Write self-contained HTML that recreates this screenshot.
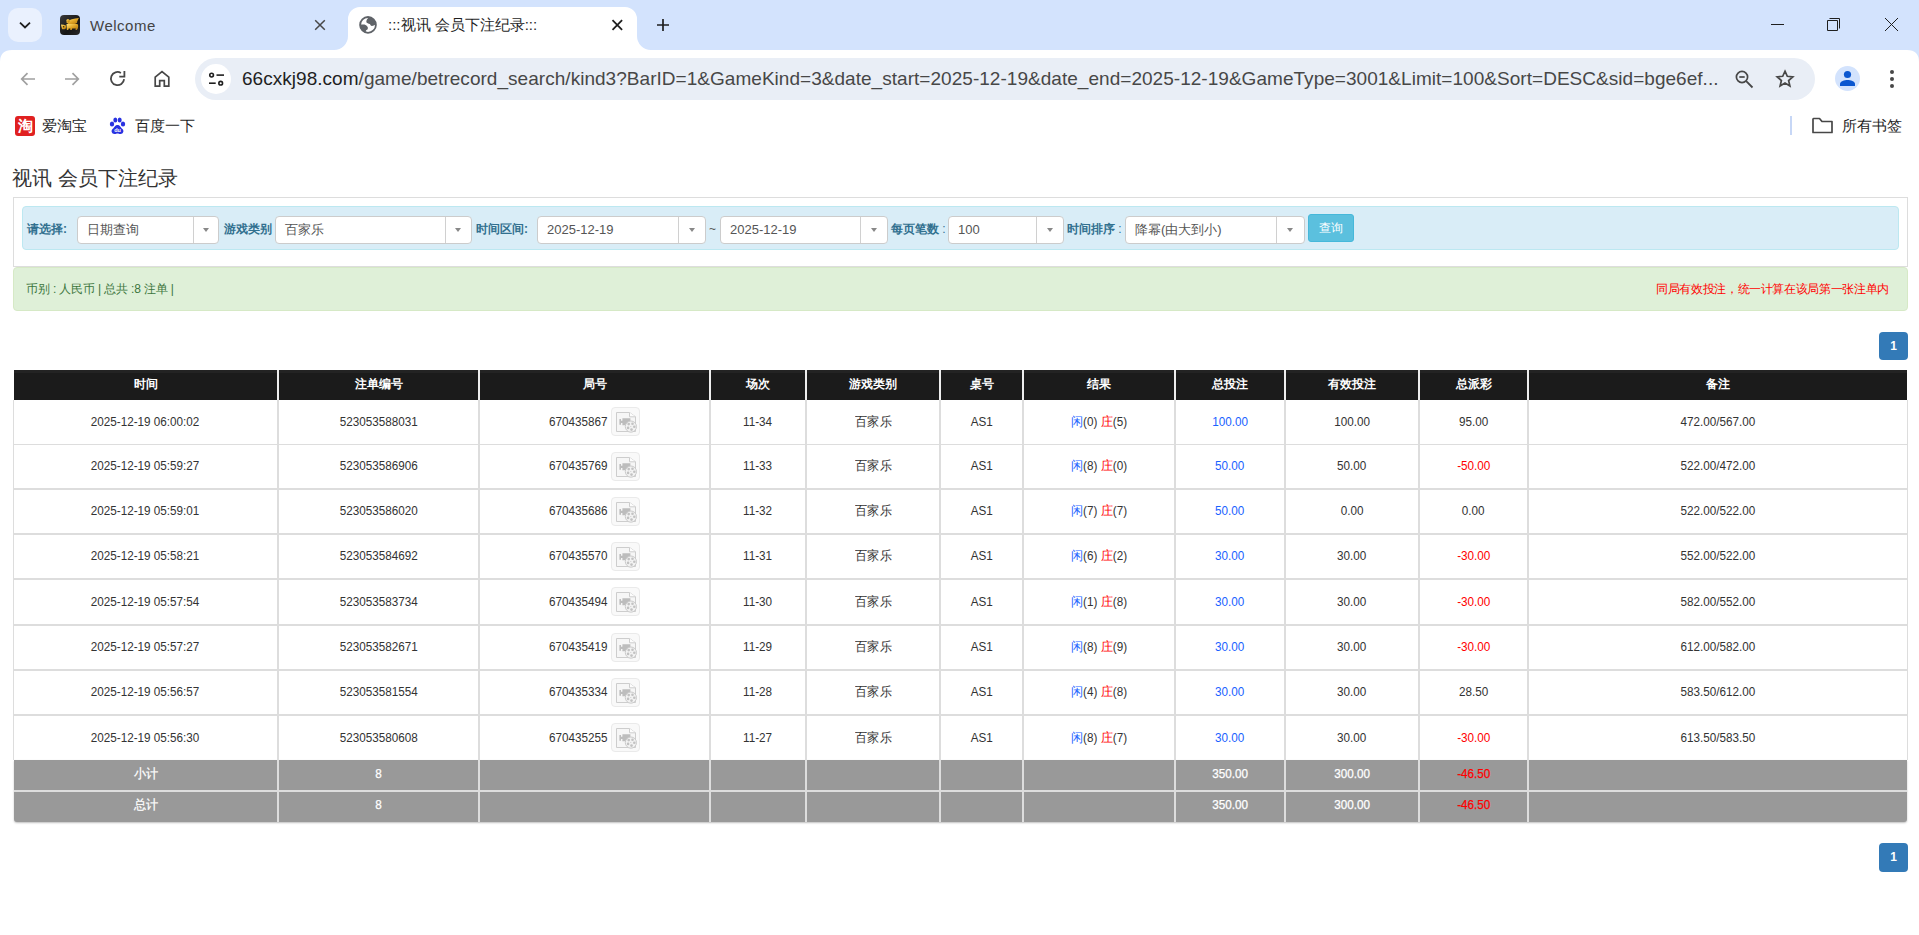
<!DOCTYPE html>
<html><head><meta charset="utf-8">
<style>
*{box-sizing:border-box}
html,body{margin:0;padding:0;width:1919px;height:935px;overflow:hidden;background:#fff;font-family:"Liberation Sans",sans-serif;color:#333}
.a{position:absolute}
#tabbar{position:absolute;left:0;top:0;width:1919px;height:50px;background:#d3e3fd}
#toolbar{position:absolute;left:0;top:50px;width:1919px;height:92px;background:#fff}
.ttl{position:absolute;white-space:nowrap;font-size:16px;color:#1f1f1f}
.omni{position:absolute;left:195px;top:58px;width:1620px;height:42px;border-radius:21px;background:#e9eef6}
.url{position:absolute;left:242px;top:67px;font-size:19px;letter-spacing:0.035px;white-space:nowrap;color:#474747;line-height:24px}
.url b{font-weight:normal;color:#1f1f1f}
.bm{position:absolute;font-size:15px;color:#1f1f1f;white-space:nowrap;line-height:18px}
/* page */
.h1{position:absolute;left:12px;top:164px;font-size:20px;line-height:28px;color:#333;white-space:nowrap}
.panel{position:absolute;left:13px;top:197px;width:1895px;height:70px;border:1px solid #ddd;border-bottom:1px solid #ddd}
.info{position:absolute;left:22px;top:206px;width:1877px;height:44px;background:#d9edf7;border:1px solid #bce8f1;border-radius:4px}
.lab{position:absolute;top:221px;font-size:12px;font-weight:bold;color:#31708f;white-space:nowrap;line-height:16px}
.sel{position:absolute;top:216px;height:28px;background:#fff;border:1px solid #ccc;border-radius:4px}
.sel .tx{position:absolute;left:9px;top:0;line-height:26px;font-size:13px;color:#555;white-space:nowrap}
.sel .dv{position:absolute;top:0;bottom:0;width:1px;background:#d0d0d0}
.sel .ar{position:absolute;top:11px;width:0;height:0;border-left:3.5px solid transparent;border-right:3.5px solid transparent;border-top:4px solid #888}
.btn{position:absolute;left:1308px;top:214px;width:46px;height:28px;background:#5bc0de;border:1px solid #46b8da;border-radius:3px;color:#fff;font-size:12px;text-align:center;line-height:26px}
.alert{position:absolute;left:13px;top:267px;width:1895px;height:44px;background:#dff0d8;border:1px solid #d6e9c6;border-radius:4px}
.pg{position:absolute;left:1879px;width:29px;height:28px;background:#337ab7;border-radius:4px;color:#fff;font-size:12px;font-weight:bold;text-align:center;line-height:28px}
/* table */
.c{position:absolute;text-align:center;font-size:11.7px;color:#333;white-space:nowrap}
.s{display:inline-block;font-size:12.5px;transform:scaleX(.936);vertical-align:top;position:relative;top:1px}
.th{color:#fff;font-weight:bold;font-size:12px}
.gt{color:#fff;-webkit-text-stroke:0.25px #fff}
.gt .rd{-webkit-text-stroke:0.25px #ff0000}
.thbg{position:absolute;background:#1b1b1b;border-top:3px solid #232323}
.gbg{position:absolute;background:#999;border-radius:0 0 3px 3px;box-shadow:0 1px 2px rgba(0,0,0,.25)}
.hl{position:absolute;height:1px;background:#dddddd}
.hl2{position:absolute;height:2px;background:#dddddd}
.vl{position:absolute;width:2px;background:#dddddd}
.vl1{position:absolute;width:1px;background:#dddddd}
.bl{color:#1a62ff}
.rd{color:#ff0000}
.sj{transform-origin:0 50%;margin-right:-4px}
.vb{display:inline-block;vertical-align:middle;width:29px;height:29px;margin-left:4px;margin-top:0;border:1px solid #eaeaea;border-radius:4px;background:#f9f9f9;position:relative;line-height:0}
.vb svg{position:absolute;left:4px;top:4px}
</style></head><body>
<!-- TAB BAR -->
<div id="tabbar"></div>
<div class="a" style="left:8px;top:8px;width:34px;height:34px;border-radius:10px;background:#eaf1fe"></div>
<svg class="a" style="left:17px;top:17px" width="16" height="16" viewBox="0 0 16 16"><path d="M3 5.6L8 10.4L13 5.6" fill="none" stroke="#1f1f1f" stroke-width="1.8"/></svg>
<div class="a" style="left:60px;top:15px;width:20px;height:20px;border-radius:4px;background:linear-gradient(135deg,#3a3a3a,#151515 60%,#2a2a2a);overflow:hidden">
 <svg width="20" height="20" viewBox="0 0 20 20"><defs><linearGradient id="gd" x1="0" y1="0" x2="1" y2="1"><stop offset="0" stop-color="#ffe27a"/><stop offset=".5" stop-color="#e0a626"/><stop offset="1" stop-color="#a8700e"/></linearGradient></defs>
 <path d="M6.2 7.2C9 4.8 14 3.6 19 3.1C17.8 4.4 18.1 5.4 17.2 6.4C17.6 7.4 16.6 8.5 15 9L9 9.6Z" fill="url(#gd)"/>
 <circle cx="8" cy="5.8" r="1.7" fill="url(#gd)"/>
 <path d="M6.5 9H17.4C18.5 10 18.3 12 17.8 13.5L16.9 15H15.5L15.8 13.6H12.2L11.7 15H10.2L10.4 13.6H8.7L8.2 15H6.9L6.6 12Z" fill="url(#gd)"/>
 <path d="M1 9.6C2.6 9.6 4.5 10 6 10.6V13.2C4.6 14.6 3 14.6 2 13.9C1.5 12.2 1.2 11.1 1 9.6Z" fill="url(#gd)"/>
 <circle cx="3.6" cy="11.8" r="0.8" fill="#3a2a08"/></svg>
</div>
<div class="ttl" style="left:90px;top:17px;line-height:18px;font-size:15px;letter-spacing:0.5px;color:#444">Welcome</div>
<svg class="a" style="left:313px;top:18px" width="14" height="14" viewBox="0 0 14 14"><path d="M2.2 2.2L11.8 11.8M11.8 2.2L2.2 11.8" stroke="#474747" stroke-width="1.5"/></svg>
<!-- active tab -->
<svg class="a" style="left:334px;top:0" width="317" height="50" viewBox="0 0 317 50"><path d="M0 50A14 14 0 0 0 14 36V19A12 12 0 0 1 26 7H291A12 12 0 0 1 303 19V36A14 14 0 0 0 317 50Z" fill="#fff"/></svg>
<svg class="a" style="left:358px;top:15px" width="20" height="20" viewBox="0 0 20 20"><circle cx="10" cy="9.9" r="7.9" fill="#fff" stroke="#5f6368" stroke-width="1.8"/><path d="M11 2.1C10 3.5 8.3 4.6 8.3 6.9C8.6 8.4 10.6 8.2 11.8 9.1C12.4 9.8 12.6 11 14 11C15.2 11 16.3 10.4 17.9 9.6A7.9 7.9 0 0 0 11 2.1Z" fill="#5f6368"/><path d="M2.1 9.6C4 9.7 6.5 9.3 8 10.2C9.3 11 10.6 12.6 9.6 14.2C9 15 7.9 14.9 7.8 16.1C7.7 16.8 7.6 17.2 7.8 17.6A7.9 7.9 0 0 1 2.1 9.6Z" fill="#5f6368"/></svg>
<div class="ttl" style="left:388px;top:16px;line-height:18px;font-size:15px;color:#1f1f1f">:::视讯 会员下注纪录:::</div>
<svg class="a" style="left:610px;top:18px" width="14" height="14" viewBox="0 0 14 14"><path d="M2.5 2.2L12.1 11.8M12.1 2.2L2.5 11.8" stroke="#1f1f1f" stroke-width="1.8"/></svg>
<svg class="a" style="left:655px;top:17px" width="16" height="16" viewBox="0 0 16 16"><path d="M8 2V14M2 8H14" stroke="#1f1f1f" stroke-width="1.7"/></svg>
<!-- window controls -->
<div class="a" style="left:1771px;top:24px;width:13px;height:1px;background:#1f1f1f"></div>
<svg class="a" style="left:1826px;top:17px" width="16" height="16" viewBox="0 0 16 16"><path d="M1.5 3.5H11.5V13.5H1.5Z" fill="none" stroke="#1f1f1f" stroke-width="1"/><path d="M3.5 1.5H13.5V11.5" fill="none" stroke="#1f1f1f" stroke-width="1"/></svg>
<svg class="a" style="left:1884px;top:17px" width="15" height="15" viewBox="0 0 15 15"><path d="M1 1L14 14M14 1L1 14" stroke="#1f1f1f" stroke-width="1"/></svg>
<!-- TOOLBAR -->
<div id="toolbar"></div>
<svg class="a" style="left:0;top:50px" width="12" height="12" viewBox="0 0 12 12"><path d="M0 0H12Q0 0 0 12Z" fill="#d3e3fd"/></svg>
<svg class="a" style="left:1907px;top:50px" width="12" height="12" viewBox="0 0 12 12"><path d="M0 0H12V12Q12 0 0 0Z" fill="#d3e3fd"/></svg>
<svg class="a" style="left:18px;top:69px" width="20" height="20" viewBox="0 0 20 20"><path d="M17 10H4M9.5 4.2L3.7 10L9.5 15.8" fill="none" stroke="#a0a0a0" stroke-width="1.7"/></svg>
<svg class="a" style="left:62px;top:69px" width="20" height="20" viewBox="0 0 20 20"><path d="M3 10H16M10.5 4.2L16.3 10L10.5 15.8" fill="none" stroke="#a0a0a0" stroke-width="1.7"/></svg>
<svg class="a" style="left:107px;top:69px" width="20" height="20" viewBox="0 0 20 20"><path d="M13.9 3.9A6.6 6.6 0 1 0 17.1 10.2" fill="none" stroke="#474747" stroke-width="1.8"/><path d="M12.3 7.6H17.4V2.1" fill="none" stroke="#474747" stroke-width="1.8"/></svg>
<svg class="a" style="left:152px;top:69px" width="20" height="20" viewBox="0 0 20 20"><path d="M3.2 17.2V8.2L10 2.6L16.8 8.2V17.2H12.3V11.6H7.7V17.2Z" fill="none" stroke="#474747" stroke-width="1.7" stroke-linejoin="miter"/></svg>
<div class="omni"></div>
<div class="a" style="left:201px;top:64px;width:30px;height:30px;border-radius:15px;background:#fff"></div>
<svg class="a" style="left:206px;top:69px" width="20" height="20" viewBox="0 0 20 20"><circle cx="5.6" cy="6.1" r="1.85" fill="none" stroke="#1f1f1f" stroke-width="1.6"/><path d="M10.5 6.1H18" stroke="#1f1f1f" stroke-width="1.6"/><circle cx="14.7" cy="14.2" r="1.85" fill="none" stroke="#1f1f1f" stroke-width="1.6"/><path d="M3 14.2H9.7" stroke="#1f1f1f" stroke-width="1.6"/></svg>
<div class="url"><b>66cxkj98.com</b>/game/betrecord_search/kind3?BarID=1&amp;GameKind=3&amp;date_start=2025-12-19&amp;date_end=2025-12-19&amp;GameType=3001&amp;Limit=100&amp;Sort=DESC&amp;sid=bge6ef...</div>
<svg class="a" style="left:1734px;top:69px" width="20" height="20" viewBox="0 0 20 20"><circle cx="8" cy="8" r="5.6" fill="none" stroke="#474747" stroke-width="1.7"/><path d="M5.3 8H10.7" stroke="#474747" stroke-width="1.7"/><path d="M12.2 12.2L18.5 18.5" stroke="#474747" stroke-width="1.8"/></svg>
<svg class="a" style="left:1775px;top:69px" width="20" height="20" viewBox="0 0 20 20"><path d="M10 2.2L12.3 7.3L17.8 7.8L13.6 11.5L14.9 17L10 14.1L5.1 17L6.4 11.5L2.2 7.8L7.7 7.3Z" fill="none" stroke="#474747" stroke-width="1.7" stroke-linejoin="miter"/></svg>
<div class="a" style="left:1835px;top:66px;width:25px;height:25px;border-radius:13px;background:#d3e3fd"></div>
<svg class="a" style="left:1837px;top:68px" width="21" height="21" viewBox="0 0 21 21"><circle cx="10.5" cy="6.5" r="3.6" fill="#0b57d0"/><path d="M3 17.9V15.8C3 13.3 7.5 11.9 10.5 11.9C13.5 11.9 18 13.3 18 15.8V17.9Z" fill="#0b57d0"/></svg>
<div class="a" style="left:1890px;top:70px;width:4px;height:4px;border-radius:2px;background:#474747"></div>
<div class="a" style="left:1890px;top:77px;width:4px;height:4px;border-radius:2px;background:#474747"></div>
<div class="a" style="left:1890px;top:84px;width:4px;height:4px;border-radius:2px;background:#474747"></div>
<!-- bookmarks -->
<div class="a" style="left:15px;top:116px;width:20px;height:20px;border-radius:3px;background:#e02020;color:#fff;font-size:15px;font-weight:bold;line-height:20px;text-align:center">淘</div>
<div class="bm" style="left:42px;top:117px">爱淘宝</div>
<svg class="a" style="left:109px;top:117px" width="17" height="18" viewBox="0 0 17 18"><ellipse cx="3" cy="7" rx="2.2" ry="2.6" fill="#2932e1"/><ellipse cx="6.3" cy="3" rx="2" ry="2.5" fill="#2932e1"/><ellipse cx="10.7" cy="3" rx="2" ry="2.5" fill="#2932e1"/><ellipse cx="14" cy="7" rx="2.2" ry="2.6" fill="#2932e1"/><path d="M8.5 8C6 8 5.5 10.5 3.5 12C1.8 13.5 2.5 17 5.5 17C7 17 7.5 16.5 8.5 16.5C9.5 16.5 10 17 11.5 17C14.5 17 15.2 13.5 13.5 12C11.5 10.5 11 8 8.5 8Z" fill="#2932e1"/><text x="8.5" y="15.3" font-size="5.5" font-family="Liberation Sans" font-weight="bold" fill="#fff" text-anchor="middle">du</text></svg>
<div class="bm" style="left:135px;top:117px">百度一下</div>
<div class="a" style="left:1790px;top:116px;width:2px;height:19px;background:#c7d7f6"></div>
<svg class="a" style="left:1812px;top:117px" width="21" height="17" viewBox="0 0 21 17"><path d="M1 2V15.5H20V4.5H10L7.5 1.5H1.5Z" fill="none" stroke="#474747" stroke-width="1.7" stroke-linejoin="round"/></svg>
<div class="bm" style="left:1842px;top:117px">所有书签</div>

<!-- PAGE -->
<div class="h1">视讯 会员下注纪录</div>
<div class="panel"></div>
<div class="info"></div>
<div class="lab" style="left:27px">请选择:</div>
<div class="sel" style="left:77px;width:142px"><div class="tx">日期查询</div><div class="dv" style="left:115px"></div><div class="ar" style="left:124.8px"></div></div>
<div class="lab" style="left:224px">游戏类别</div>
<div class="sel" style="left:275px;width:197px"><div class="tx">百家乐</div><div class="dv" style="left:169px"></div><div class="ar" style="left:179.3px"></div></div>
<div class="lab" style="left:476px">时间区间:</div>
<div class="sel" style="left:537px;width:169px"><div class="tx">2025-12-19</div><div class="dv" style="left:140px"></div><div class="ar" style="left:150.8px"></div></div>
<div class="a" style="left:709px;top:221px;font-size:12px;color:#555;line-height:16px">~</div>
<div class="sel" style="left:720px;width:168px"><div class="tx">2025-12-19</div><div class="dv" style="left:139px"></div><div class="ar" style="left:149.8px"></div></div>
<div class="lab" style="left:891px">每页笔数<span style="font-weight:normal"> :</span></div>
<div class="sel" style="left:948px;width:116px"><div class="tx">100</div><div class="dv" style="left:87px"></div><div class="ar" style="left:97.8px"></div></div>
<div class="lab" style="left:1067px">时间排序<span style="font-weight:normal"> :</span></div>
<div class="sel" style="left:1125px;width:180px"><div class="tx">降幂(由大到小)</div><div class="dv" style="left:150px"></div><div class="ar" style="left:161.3px"></div></div>
<div class="btn">查询</div>
<div class="alert"></div>
<div class="a" style="left:26px;top:281px;font-size:12px;line-height:16px;color:#3c763d;white-space:nowrap;letter-spacing:-0.15px">币别 : 人民币 | 总共 :8 注单 |</div>
<div class="a" style="right:30px;top:281px;font-size:12px;line-height:16px;color:#ff0000;white-space:nowrap;letter-spacing:-0.35px">同局有效投注，统一计算在该局第一张注单内</div>
<div class="pg" style="top:332px">1</div>
<div class="thbg" style="left:14px;top:370px;width:1893px;height:30px"></div>
<div class="c th" style="left:14px;top:369px;width:263px;height:30px;line-height:30px">时间</div>
<div class="c th" style="left:279px;top:369px;width:199px;height:30px;line-height:30px">注单编号</div>
<div class="c th" style="left:480px;top:369px;width:229px;height:30px;line-height:30px">局号</div>
<div class="c th" style="left:711px;top:369px;width:94px;height:30px;line-height:30px">场次</div>
<div class="c th" style="left:807px;top:369px;width:132px;height:30px;line-height:30px">游戏类别</div>
<div class="c th" style="left:941px;top:369px;width:81px;height:30px;line-height:30px">桌号</div>
<div class="c th" style="left:1024px;top:369px;width:150px;height:30px;line-height:30px">结果</div>
<div class="c th" style="left:1176px;top:369px;width:108px;height:30px;line-height:30px">总投注</div>
<div class="c th" style="left:1286px;top:369px;width:132px;height:30px;line-height:30px">有效投注</div>
<div class="c th" style="left:1420px;top:369px;width:107px;height:30px;line-height:30px">总派彩</div>
<div class="c th" style="left:1529px;top:369px;width:378px;height:30px;line-height:30px">备注</div>
<div class="c " style="left:14px;top:399px;width:263px;height:44px;line-height:44px"><span class="s">2025-12-19 06:00:02</span></div>
<div class="c " style="left:279px;top:399px;width:199px;height:44px;line-height:44px"><span class="s">523053588031</span></div>
<div class="c " style="left:480px;top:399px;width:229px;height:44px;line-height:44px"><span class="s sj">670435867</span><span class="vb"><svg width="22" height="22" viewBox="0 0 22 22"><path d="M0.5 0.5H13.5L19.5 4.8V19.5H0.5Z" fill="#f6f6f6" stroke="#cdcdcd"/><path d="M13.5 0.5V4.8H19.5" fill="#fdfdfd" stroke="#cdcdcd"/><path d="M3.4 7.1H5V8.8H6.4V6.3H14.4V13.3H6.4V11H5V12.7H3.4Z" fill="#bdbdbd"/><circle cx="14.9" cy="14.6" r="5.6" fill="#f2f2f2" stroke="#cbcbcb"/><circle cx="12.7" cy="12.1" r="1.3" fill="#c2c2c2"/><circle cx="16.5" cy="11.7" r="1.3" fill="#c2c2c2"/><circle cx="18.3" cy="14.8" r="1.3" fill="#c2c2c2"/><circle cx="15.5" cy="17.6" r="1.3" fill="#c2c2c2"/><circle cx="12.1" cy="15.9" r="1.3" fill="#c2c2c2"/><circle cx="14.8" cy="14.5" r="0.5" fill="#c6c6c6"/></svg></span></div>
<div class="c " style="left:711px;top:399px;width:94px;height:44px;line-height:44px"><span class="s">11-34</span></div>
<div class="c " style="left:807px;top:399px;width:132px;height:44px;line-height:44px"><span class="s">百家乐</span></div>
<div class="c " style="left:941px;top:399px;width:81px;height:44px;line-height:44px"><span class="s">AS1</span></div>
<div class="c " style="left:1024px;top:399px;width:150px;height:44px;line-height:44px"><span class="s"><span class="bl">闲</span>(0) <span class="rd">庄</span>(5)</span></div>
<div class="c " style="left:1176px;top:399px;width:108px;height:44px;line-height:44px"><span class="s bl">100.00</span></div>
<div class="c " style="left:1286px;top:399px;width:132px;height:44px;line-height:44px"><span class="s">100.00</span></div>
<div class="c " style="left:1420px;top:399px;width:107px;height:44px;line-height:44px"><span class="s">95.00</span></div>
<div class="c " style="left:1529px;top:399px;width:378px;height:44px;line-height:44px"><span class="s">472.00/567.00</span></div>
<div class="hl" style="left:14px;top:444px;width:1894px;height:1px"></div>
<div class="c " style="left:14px;top:444px;width:263px;height:43px;line-height:43px"><span class="s">2025-12-19 05:59:27</span></div>
<div class="c " style="left:279px;top:444px;width:199px;height:43px;line-height:43px"><span class="s">523053586906</span></div>
<div class="c " style="left:480px;top:444px;width:229px;height:43px;line-height:43px"><span class="s sj">670435769</span><span class="vb"><svg width="22" height="22" viewBox="0 0 22 22"><path d="M0.5 0.5H13.5L19.5 4.8V19.5H0.5Z" fill="#f6f6f6" stroke="#cdcdcd"/><path d="M13.5 0.5V4.8H19.5" fill="#fdfdfd" stroke="#cdcdcd"/><path d="M3.4 7.1H5V8.8H6.4V6.3H14.4V13.3H6.4V11H5V12.7H3.4Z" fill="#bdbdbd"/><circle cx="14.9" cy="14.6" r="5.6" fill="#f2f2f2" stroke="#cbcbcb"/><circle cx="12.7" cy="12.1" r="1.3" fill="#c2c2c2"/><circle cx="16.5" cy="11.7" r="1.3" fill="#c2c2c2"/><circle cx="18.3" cy="14.8" r="1.3" fill="#c2c2c2"/><circle cx="15.5" cy="17.6" r="1.3" fill="#c2c2c2"/><circle cx="12.1" cy="15.9" r="1.3" fill="#c2c2c2"/><circle cx="14.8" cy="14.5" r="0.5" fill="#c6c6c6"/></svg></span></div>
<div class="c " style="left:711px;top:444px;width:94px;height:43px;line-height:43px"><span class="s">11-33</span></div>
<div class="c " style="left:807px;top:444px;width:132px;height:43px;line-height:43px"><span class="s">百家乐</span></div>
<div class="c " style="left:941px;top:444px;width:81px;height:43px;line-height:43px"><span class="s">AS1</span></div>
<div class="c " style="left:1024px;top:444px;width:150px;height:43px;line-height:43px"><span class="s"><span class="bl">闲</span>(8) <span class="rd">庄</span>(0)</span></div>
<div class="c " style="left:1176px;top:444px;width:108px;height:43px;line-height:43px"><span class="s bl">50.00</span></div>
<div class="c " style="left:1286px;top:444px;width:132px;height:43px;line-height:43px"><span class="s">50.00</span></div>
<div class="c " style="left:1420px;top:444px;width:107px;height:43px;line-height:43px"><span class="s rd">-50.00</span></div>
<div class="c " style="left:1529px;top:444px;width:378px;height:43px;line-height:43px"><span class="s">522.00/472.00</span></div>
<div class="hl" style="left:14px;top:488px;width:1894px;height:2px"></div>
<div class="c " style="left:14px;top:489px;width:263px;height:43px;line-height:43px"><span class="s">2025-12-19 05:59:01</span></div>
<div class="c " style="left:279px;top:489px;width:199px;height:43px;line-height:43px"><span class="s">523053586020</span></div>
<div class="c " style="left:480px;top:489px;width:229px;height:43px;line-height:43px"><span class="s sj">670435686</span><span class="vb"><svg width="22" height="22" viewBox="0 0 22 22"><path d="M0.5 0.5H13.5L19.5 4.8V19.5H0.5Z" fill="#f6f6f6" stroke="#cdcdcd"/><path d="M13.5 0.5V4.8H19.5" fill="#fdfdfd" stroke="#cdcdcd"/><path d="M3.4 7.1H5V8.8H6.4V6.3H14.4V13.3H6.4V11H5V12.7H3.4Z" fill="#bdbdbd"/><circle cx="14.9" cy="14.6" r="5.6" fill="#f2f2f2" stroke="#cbcbcb"/><circle cx="12.7" cy="12.1" r="1.3" fill="#c2c2c2"/><circle cx="16.5" cy="11.7" r="1.3" fill="#c2c2c2"/><circle cx="18.3" cy="14.8" r="1.3" fill="#c2c2c2"/><circle cx="15.5" cy="17.6" r="1.3" fill="#c2c2c2"/><circle cx="12.1" cy="15.9" r="1.3" fill="#c2c2c2"/><circle cx="14.8" cy="14.5" r="0.5" fill="#c6c6c6"/></svg></span></div>
<div class="c " style="left:711px;top:489px;width:94px;height:43px;line-height:43px"><span class="s">11-32</span></div>
<div class="c " style="left:807px;top:489px;width:132px;height:43px;line-height:43px"><span class="s">百家乐</span></div>
<div class="c " style="left:941px;top:489px;width:81px;height:43px;line-height:43px"><span class="s">AS1</span></div>
<div class="c " style="left:1024px;top:489px;width:150px;height:43px;line-height:43px"><span class="s"><span class="bl">闲</span>(7) <span class="rd">庄</span>(7)</span></div>
<div class="c " style="left:1176px;top:489px;width:108px;height:43px;line-height:43px"><span class="s bl">50.00</span></div>
<div class="c " style="left:1286px;top:489px;width:132px;height:43px;line-height:43px"><span class="s">0.00</span></div>
<div class="c " style="left:1420px;top:489px;width:107px;height:43px;line-height:43px"><span class="s">0.00</span></div>
<div class="c " style="left:1529px;top:489px;width:378px;height:43px;line-height:43px"><span class="s">522.00/522.00</span></div>
<div class="hl" style="left:14px;top:533px;width:1894px;height:2px"></div>
<div class="c " style="left:14px;top:534px;width:263px;height:43px;line-height:43px"><span class="s">2025-12-19 05:58:21</span></div>
<div class="c " style="left:279px;top:534px;width:199px;height:43px;line-height:43px"><span class="s">523053584692</span></div>
<div class="c " style="left:480px;top:534px;width:229px;height:43px;line-height:43px"><span class="s sj">670435570</span><span class="vb"><svg width="22" height="22" viewBox="0 0 22 22"><path d="M0.5 0.5H13.5L19.5 4.8V19.5H0.5Z" fill="#f6f6f6" stroke="#cdcdcd"/><path d="M13.5 0.5V4.8H19.5" fill="#fdfdfd" stroke="#cdcdcd"/><path d="M3.4 7.1H5V8.8H6.4V6.3H14.4V13.3H6.4V11H5V12.7H3.4Z" fill="#bdbdbd"/><circle cx="14.9" cy="14.6" r="5.6" fill="#f2f2f2" stroke="#cbcbcb"/><circle cx="12.7" cy="12.1" r="1.3" fill="#c2c2c2"/><circle cx="16.5" cy="11.7" r="1.3" fill="#c2c2c2"/><circle cx="18.3" cy="14.8" r="1.3" fill="#c2c2c2"/><circle cx="15.5" cy="17.6" r="1.3" fill="#c2c2c2"/><circle cx="12.1" cy="15.9" r="1.3" fill="#c2c2c2"/><circle cx="14.8" cy="14.5" r="0.5" fill="#c6c6c6"/></svg></span></div>
<div class="c " style="left:711px;top:534px;width:94px;height:43px;line-height:43px"><span class="s">11-31</span></div>
<div class="c " style="left:807px;top:534px;width:132px;height:43px;line-height:43px"><span class="s">百家乐</span></div>
<div class="c " style="left:941px;top:534px;width:81px;height:43px;line-height:43px"><span class="s">AS1</span></div>
<div class="c " style="left:1024px;top:534px;width:150px;height:43px;line-height:43px"><span class="s"><span class="bl">闲</span>(6) <span class="rd">庄</span>(2)</span></div>
<div class="c " style="left:1176px;top:534px;width:108px;height:43px;line-height:43px"><span class="s bl">30.00</span></div>
<div class="c " style="left:1286px;top:534px;width:132px;height:43px;line-height:43px"><span class="s">30.00</span></div>
<div class="c " style="left:1420px;top:534px;width:107px;height:43px;line-height:43px"><span class="s rd">-30.00</span></div>
<div class="c " style="left:1529px;top:534px;width:378px;height:43px;line-height:43px"><span class="s">552.00/522.00</span></div>
<div class="hl" style="left:14px;top:578px;width:1894px;height:2px"></div>
<div class="c " style="left:14px;top:579px;width:263px;height:44px;line-height:44px"><span class="s">2025-12-19 05:57:54</span></div>
<div class="c " style="left:279px;top:579px;width:199px;height:44px;line-height:44px"><span class="s">523053583734</span></div>
<div class="c " style="left:480px;top:579px;width:229px;height:44px;line-height:44px"><span class="s sj">670435494</span><span class="vb"><svg width="22" height="22" viewBox="0 0 22 22"><path d="M0.5 0.5H13.5L19.5 4.8V19.5H0.5Z" fill="#f6f6f6" stroke="#cdcdcd"/><path d="M13.5 0.5V4.8H19.5" fill="#fdfdfd" stroke="#cdcdcd"/><path d="M3.4 7.1H5V8.8H6.4V6.3H14.4V13.3H6.4V11H5V12.7H3.4Z" fill="#bdbdbd"/><circle cx="14.9" cy="14.6" r="5.6" fill="#f2f2f2" stroke="#cbcbcb"/><circle cx="12.7" cy="12.1" r="1.3" fill="#c2c2c2"/><circle cx="16.5" cy="11.7" r="1.3" fill="#c2c2c2"/><circle cx="18.3" cy="14.8" r="1.3" fill="#c2c2c2"/><circle cx="15.5" cy="17.6" r="1.3" fill="#c2c2c2"/><circle cx="12.1" cy="15.9" r="1.3" fill="#c2c2c2"/><circle cx="14.8" cy="14.5" r="0.5" fill="#c6c6c6"/></svg></span></div>
<div class="c " style="left:711px;top:579px;width:94px;height:44px;line-height:44px"><span class="s">11-30</span></div>
<div class="c " style="left:807px;top:579px;width:132px;height:44px;line-height:44px"><span class="s">百家乐</span></div>
<div class="c " style="left:941px;top:579px;width:81px;height:44px;line-height:44px"><span class="s">AS1</span></div>
<div class="c " style="left:1024px;top:579px;width:150px;height:44px;line-height:44px"><span class="s"><span class="bl">闲</span>(1) <span class="rd">庄</span>(8)</span></div>
<div class="c " style="left:1176px;top:579px;width:108px;height:44px;line-height:44px"><span class="s bl">30.00</span></div>
<div class="c " style="left:1286px;top:579px;width:132px;height:44px;line-height:44px"><span class="s">30.00</span></div>
<div class="c " style="left:1420px;top:579px;width:107px;height:44px;line-height:44px"><span class="s rd">-30.00</span></div>
<div class="c " style="left:1529px;top:579px;width:378px;height:44px;line-height:44px"><span class="s">582.00/552.00</span></div>
<div class="hl" style="left:14px;top:624px;width:1894px;height:2px"></div>
<div class="c " style="left:14px;top:625px;width:263px;height:43px;line-height:43px"><span class="s">2025-12-19 05:57:27</span></div>
<div class="c " style="left:279px;top:625px;width:199px;height:43px;line-height:43px"><span class="s">523053582671</span></div>
<div class="c " style="left:480px;top:625px;width:229px;height:43px;line-height:43px"><span class="s sj">670435419</span><span class="vb"><svg width="22" height="22" viewBox="0 0 22 22"><path d="M0.5 0.5H13.5L19.5 4.8V19.5H0.5Z" fill="#f6f6f6" stroke="#cdcdcd"/><path d="M13.5 0.5V4.8H19.5" fill="#fdfdfd" stroke="#cdcdcd"/><path d="M3.4 7.1H5V8.8H6.4V6.3H14.4V13.3H6.4V11H5V12.7H3.4Z" fill="#bdbdbd"/><circle cx="14.9" cy="14.6" r="5.6" fill="#f2f2f2" stroke="#cbcbcb"/><circle cx="12.7" cy="12.1" r="1.3" fill="#c2c2c2"/><circle cx="16.5" cy="11.7" r="1.3" fill="#c2c2c2"/><circle cx="18.3" cy="14.8" r="1.3" fill="#c2c2c2"/><circle cx="15.5" cy="17.6" r="1.3" fill="#c2c2c2"/><circle cx="12.1" cy="15.9" r="1.3" fill="#c2c2c2"/><circle cx="14.8" cy="14.5" r="0.5" fill="#c6c6c6"/></svg></span></div>
<div class="c " style="left:711px;top:625px;width:94px;height:43px;line-height:43px"><span class="s">11-29</span></div>
<div class="c " style="left:807px;top:625px;width:132px;height:43px;line-height:43px"><span class="s">百家乐</span></div>
<div class="c " style="left:941px;top:625px;width:81px;height:43px;line-height:43px"><span class="s">AS1</span></div>
<div class="c " style="left:1024px;top:625px;width:150px;height:43px;line-height:43px"><span class="s"><span class="bl">闲</span>(8) <span class="rd">庄</span>(9)</span></div>
<div class="c " style="left:1176px;top:625px;width:108px;height:43px;line-height:43px"><span class="s bl">30.00</span></div>
<div class="c " style="left:1286px;top:625px;width:132px;height:43px;line-height:43px"><span class="s">30.00</span></div>
<div class="c " style="left:1420px;top:625px;width:107px;height:43px;line-height:43px"><span class="s rd">-30.00</span></div>
<div class="c " style="left:1529px;top:625px;width:378px;height:43px;line-height:43px"><span class="s">612.00/582.00</span></div>
<div class="hl" style="left:14px;top:669px;width:1894px;height:2px"></div>
<div class="c " style="left:14px;top:670px;width:263px;height:43px;line-height:43px"><span class="s">2025-12-19 05:56:57</span></div>
<div class="c " style="left:279px;top:670px;width:199px;height:43px;line-height:43px"><span class="s">523053581554</span></div>
<div class="c " style="left:480px;top:670px;width:229px;height:43px;line-height:43px"><span class="s sj">670435334</span><span class="vb"><svg width="22" height="22" viewBox="0 0 22 22"><path d="M0.5 0.5H13.5L19.5 4.8V19.5H0.5Z" fill="#f6f6f6" stroke="#cdcdcd"/><path d="M13.5 0.5V4.8H19.5" fill="#fdfdfd" stroke="#cdcdcd"/><path d="M3.4 7.1H5V8.8H6.4V6.3H14.4V13.3H6.4V11H5V12.7H3.4Z" fill="#bdbdbd"/><circle cx="14.9" cy="14.6" r="5.6" fill="#f2f2f2" stroke="#cbcbcb"/><circle cx="12.7" cy="12.1" r="1.3" fill="#c2c2c2"/><circle cx="16.5" cy="11.7" r="1.3" fill="#c2c2c2"/><circle cx="18.3" cy="14.8" r="1.3" fill="#c2c2c2"/><circle cx="15.5" cy="17.6" r="1.3" fill="#c2c2c2"/><circle cx="12.1" cy="15.9" r="1.3" fill="#c2c2c2"/><circle cx="14.8" cy="14.5" r="0.5" fill="#c6c6c6"/></svg></span></div>
<div class="c " style="left:711px;top:670px;width:94px;height:43px;line-height:43px"><span class="s">11-28</span></div>
<div class="c " style="left:807px;top:670px;width:132px;height:43px;line-height:43px"><span class="s">百家乐</span></div>
<div class="c " style="left:941px;top:670px;width:81px;height:43px;line-height:43px"><span class="s">AS1</span></div>
<div class="c " style="left:1024px;top:670px;width:150px;height:43px;line-height:43px"><span class="s"><span class="bl">闲</span>(4) <span class="rd">庄</span>(8)</span></div>
<div class="c " style="left:1176px;top:670px;width:108px;height:43px;line-height:43px"><span class="s bl">30.00</span></div>
<div class="c " style="left:1286px;top:670px;width:132px;height:43px;line-height:43px"><span class="s">30.00</span></div>
<div class="c " style="left:1420px;top:670px;width:107px;height:43px;line-height:43px"><span class="s">28.50</span></div>
<div class="c " style="left:1529px;top:670px;width:378px;height:43px;line-height:43px"><span class="s">583.50/612.00</span></div>
<div class="hl" style="left:14px;top:714px;width:1894px;height:2px"></div>
<div class="c " style="left:14px;top:715px;width:263px;height:44px;line-height:44px"><span class="s">2025-12-19 05:56:30</span></div>
<div class="c " style="left:279px;top:715px;width:199px;height:44px;line-height:44px"><span class="s">523053580608</span></div>
<div class="c " style="left:480px;top:715px;width:229px;height:44px;line-height:44px"><span class="s sj">670435255</span><span class="vb"><svg width="22" height="22" viewBox="0 0 22 22"><path d="M0.5 0.5H13.5L19.5 4.8V19.5H0.5Z" fill="#f6f6f6" stroke="#cdcdcd"/><path d="M13.5 0.5V4.8H19.5" fill="#fdfdfd" stroke="#cdcdcd"/><path d="M3.4 7.1H5V8.8H6.4V6.3H14.4V13.3H6.4V11H5V12.7H3.4Z" fill="#bdbdbd"/><circle cx="14.9" cy="14.6" r="5.6" fill="#f2f2f2" stroke="#cbcbcb"/><circle cx="12.7" cy="12.1" r="1.3" fill="#c2c2c2"/><circle cx="16.5" cy="11.7" r="1.3" fill="#c2c2c2"/><circle cx="18.3" cy="14.8" r="1.3" fill="#c2c2c2"/><circle cx="15.5" cy="17.6" r="1.3" fill="#c2c2c2"/><circle cx="12.1" cy="15.9" r="1.3" fill="#c2c2c2"/><circle cx="14.8" cy="14.5" r="0.5" fill="#c6c6c6"/></svg></span></div>
<div class="c " style="left:711px;top:715px;width:94px;height:44px;line-height:44px"><span class="s">11-27</span></div>
<div class="c " style="left:807px;top:715px;width:132px;height:44px;line-height:44px"><span class="s">百家乐</span></div>
<div class="c " style="left:941px;top:715px;width:81px;height:44px;line-height:44px"><span class="s">AS1</span></div>
<div class="c " style="left:1024px;top:715px;width:150px;height:44px;line-height:44px"><span class="s"><span class="bl">闲</span>(8) <span class="rd">庄</span>(7)</span></div>
<div class="c " style="left:1176px;top:715px;width:108px;height:44px;line-height:44px"><span class="s bl">30.00</span></div>
<div class="c " style="left:1286px;top:715px;width:132px;height:44px;line-height:44px"><span class="s">30.00</span></div>
<div class="c " style="left:1420px;top:715px;width:107px;height:44px;line-height:44px"><span class="s rd">-30.00</span></div>
<div class="c " style="left:1529px;top:715px;width:378px;height:44px;line-height:44px"><span class="s">613.50/583.50</span></div>
<div class="gbg" style="left:14px;top:760px;width:1893px;height:62px"></div>
<div class="hl2" style="left:14px;top:790px;width:1893px"></div>
<div class="c gt" style="left:14px;top:758px;width:263px;height:30px;line-height:30px"><span class="s">小计</span></div>
<div class="c gt" style="left:279px;top:758px;width:199px;height:30px;line-height:30px"><span class="s">8</span></div>
<div class="c gt" style="left:1176px;top:758px;width:108px;height:30px;line-height:30px"><span class="s">350.00</span></div>
<div class="c gt" style="left:1286px;top:758px;width:132px;height:30px;line-height:30px"><span class="s">300.00</span></div>
<div class="c gt" style="left:1420px;top:758px;width:107px;height:30px;line-height:30px"><span class="s rd">-46.50</span></div>
<div class="c gt" style="left:14px;top:790px;width:263px;height:29px;line-height:29px"><span class="s">总计</span></div>
<div class="c gt" style="left:279px;top:790px;width:199px;height:29px;line-height:29px"><span class="s">8</span></div>
<div class="c gt" style="left:1176px;top:790px;width:108px;height:29px;line-height:29px"><span class="s">350.00</span></div>
<div class="c gt" style="left:1286px;top:790px;width:132px;height:29px;line-height:29px"><span class="s">300.00</span></div>
<div class="c gt" style="left:1420px;top:790px;width:107px;height:29px;line-height:29px"><span class="s rd">-46.50</span></div>
<div class="vl" style="left:277px;top:370px;height:30px;background:#eeeeee"></div>
<div class="vl" style="left:277px;top:400px;height:422px"></div>
<div class="vl" style="left:478px;top:370px;height:30px;background:#eeeeee"></div>
<div class="vl" style="left:478px;top:400px;height:422px"></div>
<div class="vl" style="left:709px;top:370px;height:30px;background:#eeeeee"></div>
<div class="vl" style="left:709px;top:400px;height:422px"></div>
<div class="vl" style="left:805px;top:370px;height:30px;background:#eeeeee"></div>
<div class="vl" style="left:805px;top:400px;height:422px"></div>
<div class="vl" style="left:939px;top:370px;height:30px;background:#eeeeee"></div>
<div class="vl" style="left:939px;top:400px;height:422px"></div>
<div class="vl" style="left:1022px;top:370px;height:30px;background:#eeeeee"></div>
<div class="vl" style="left:1022px;top:400px;height:422px"></div>
<div class="vl" style="left:1174px;top:370px;height:30px;background:#eeeeee"></div>
<div class="vl" style="left:1174px;top:400px;height:422px"></div>
<div class="vl" style="left:1284px;top:370px;height:30px;background:#eeeeee"></div>
<div class="vl" style="left:1284px;top:400px;height:422px"></div>
<div class="vl" style="left:1418px;top:370px;height:30px;background:#eeeeee"></div>
<div class="vl" style="left:1418px;top:400px;height:422px"></div>
<div class="vl" style="left:1527px;top:370px;height:30px;background:#eeeeee"></div>
<div class="vl" style="left:1527px;top:400px;height:422px"></div>
<div class="vl1" style="left:13px;top:400px;height:360px"></div>
<div class="vl1" style="left:1907px;top:400px;height:360px"></div>
<div class="pg" style="top:843px;height:29px;line-height:29px">1</div>
</body></html>
